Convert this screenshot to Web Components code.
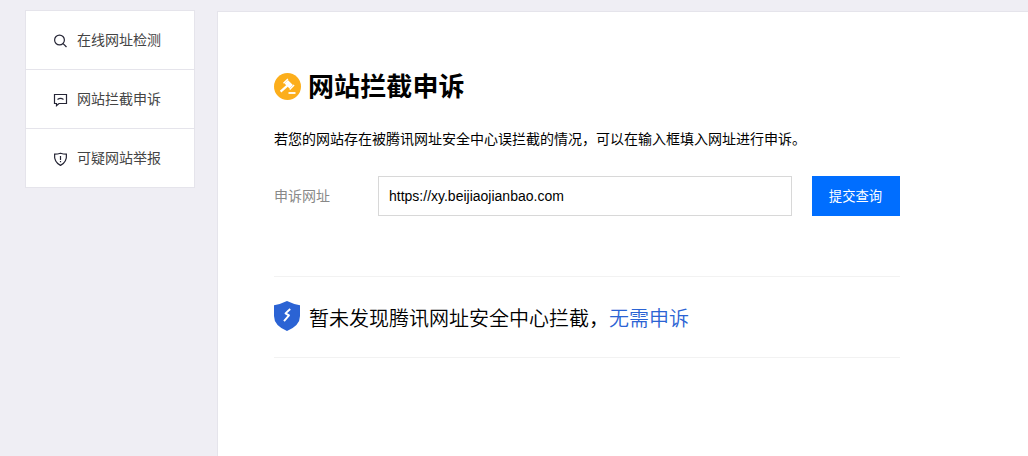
<!DOCTYPE html>
<html lang="zh-CN">
<head>
<meta charset="utf-8">
<title>网站拦截申诉</title>
<style>
    body {
        margin: 0;
        height: 456px;
        overflow: hidden;
        background: #efeef4;
        color: #000;
        font: 14px/20px "Liberation Sans", "Noto Sans CJK SC", sans-serif;
        --line: #e5e4eb;
        --primary: #006eff;
        --link: #2b63d4;
    }
</style>
</head>
<body>
<appeal-page>
    <side-menu slot="menu">
        <menu-entry icon="search">在线网址检测</menu-entry>
        <menu-entry icon="message">网站拦截申诉</menu-entry>
        <menu-entry icon="shield">可疑网站举报</menu-entry>
    </side-menu>
    <page-title>网站拦截申诉</page-title>
    <page-intro>若您的网站存在被腾讯网址安全中心误拦截的情况，可以在输入框填入网址进行申诉。</page-intro>
    <url-form label="申诉网址" value="https://xy.beijiaojianbao.com" action="提交查询"></url-form>
    <result-bar>暂未发现腾讯网址安全中心拦截，<span slot="status">无需申诉</span></result-bar>
</appeal-page>

<script>
// appeal-page: menu on the left, white panel on the right
class AppealPage extends HTMLElement {
    constructor() {
        super();
        this.attachShadow({ mode: 'open' });
        this.shadowRoot.innerHTML = `
            <style>
                :host {
                    display: flex;
                    align-items: flex-start;
                    gap: 22px;
                    padding-left: 25px;
                    height: 100%;
                    box-sizing: border-box;
                }
                aside {
                    flex: none;
                    width: 170px;
                    padding-top: 10px;
                }
                main {
                    flex: 1;
                    height: 445px;
                    margin-top: 11px;
                    padding: 56px 0 0 56px;
                    box-sizing: border-box;
                    background: #fff;
                    border: solid var(--line);
                    border-width: 1px 0 0 1px;
                }
            </style>
            <aside><slot name="menu"></slot></aside>
            <main><slot></slot></main>
        `;
    }
}
customElements.define('appeal-page', AppealPage);

class SideMenu extends HTMLElement {
    constructor() {
        super();
        this.attachShadow({ mode: 'open' });
        this.shadowRoot.innerHTML = `
            <style>
                :host {
                    display: block;
                    background: #fff;
                    border: solid var(--line);
                    border-width: 1px 1px 0;
                }
            </style>
            <slot></slot>
        `;
    }
}
customElements.define('side-menu', SideMenu);

const MENU_ICONS = {
    search: '<circle cx="5.5" cy="6" r="4.9"/><path d="M9.1 9.6 12.5 13"/>',
    message: '<path d="M.5 1.5h12v9H5L2.5 12.6v-2.1h-2z"/><path d="M3.5 6.4Q6.5 4.3 9.5 6.4"/>',
    shield: '<path d="M6.5 1.2Q9.3 2.1 12.4 2.2Q13.2 9.8 6.5 13.4Q-.2 9.8 .6 2.2Q3.7 2.1 6.5 1.2z"/><path d="M6.5 4v4M6.5 9v1.3"/>'
};

class MenuEntry extends HTMLElement {
    constructor() {
        super();
        this.attachShadow({ mode: 'open' });
        this.shadowRoot.innerHTML = `
            <style>
                :host {
                    display: flex;
                    align-items: center;
                    height: 58px;
                    padding-left: 28px;
                    color: #444;
                    border-bottom: 1px solid var(--line);
                }
                svg {
                    width: 14px;
                    height: 14px;
                    margin: 2px 9px 0 0;
                    overflow: visible;
                    fill: none;
                    stroke: #262636;
                    stroke-width: 1.2;
                }
            </style>
            <svg viewBox="0 0 14 14"></svg>
            <slot></slot>
        `;
    }

    connectedCallback() {
        this.shadowRoot.querySelector('svg').innerHTML = MENU_ICONS[this.getAttribute('icon')] || '';
    }
}
customElements.define('menu-entry', MenuEntry);

class PageTitle extends HTMLElement {
    constructor() {
        super();
        this.attachShadow({ mode: 'open' });
        this.shadowRoot.innerHTML = `
            <style>
                :host {
                    display: flex;
                    align-items: center;
                    height: 38px;
                }
                svg {
                    width: 27px;
                    height: 27px;
                    margin: 0 7px 1px 0;
                }
                h1 {
                    margin: 0;
                    font-size: 26px;
                    line-height: 38px;
                    font-weight: bold;
                    letter-spacing: .1px;
                }
            </style>
            <svg viewBox="0 0 27 27">
                <circle cx="13.5" cy="13.5" r="13.5" fill="#fcae1b"/>
                <g fill="none" stroke="#fff">
                    <path d="M12.2 8.7 17.2 13.7" stroke-width="4.8"/>
                    <path d="M13.9 5.9 9.5 10.3M20.1 12.1 15.7 16.5" stroke-width="1.4"/>
                    <path d="M13.3 12.6 6.6 18.6" stroke-width="2.2"/>
                    <path d="M14.5 20h7" stroke-width="1.8"/>
                </g>
            </svg>
            <h1><slot></slot></h1>
        `;
    }
}
customElements.define('page-title', PageTitle);

class PageIntro extends HTMLElement {
    constructor() {
        super();
        this.attachShadow({ mode: 'open' });
        this.shadowRoot.innerHTML = `
            <style>
                :host {
                    display: block;
                    margin-top: 23px;
                    line-height: 20px;
                }
            </style>
            <slot></slot>
        `;
    }
}
customElements.define('page-intro', PageIntro);

class UrlForm extends HTMLElement {
    constructor() {
        super();
        this.attachShadow({ mode: 'open' });
        this.shadowRoot.innerHTML = `
            <style>
                :host {
                    display: flex;
                    align-items: center;
                    width: 626px;
                    height: 40px;
                    margin-top: 27px;
                }
                label {
                    width: 104px;
                    color: #888;
                }
                input {
                    flex: 1;
                    min-width: 0;
                    height: 40px;
                    margin: 0 20px 0 0;
                    padding: 0 10px;
                    box-sizing: border-box;
                    border: 1px solid #d8d8d8;
                    border-radius: 0;
                    outline: none;
                    background: #fff;
                    color: #000;
                    font: inherit;
                }
                button {
                    width: 88px;
                    height: 40px;
                    padding: 2px 1px 0 0;
                    border: 0;
                    background: var(--primary);
                    color: #fff;
                    font: inherit;
                    font-size: 13.333px;
                }
            </style>
            <label for="url"></label>
            <input id="url" type="text" spellcheck="false">
            <button type="button"></button>
        `;
    }

    connectedCallback() {
        this.shadowRoot.querySelector('label').textContent = this.getAttribute('label');
        this.shadowRoot.querySelector('input').value = this.getAttribute('value');
        this.shadowRoot.querySelector('button').textContent = this.getAttribute('action');
    }
}
customElements.define('url-form', UrlForm);

class ResultBar extends HTMLElement {
    constructor() {
        super();
        this.attachShadow({ mode: 'open' });
        this.shadowRoot.innerHTML = `
            <style>
                :host {
                    display: flex;
                    align-items: center;
                    width: 626px;
                    height: 82px;
                    margin-top: 60px;
                    box-sizing: border-box;
                    border: solid #f2f2f2;
                    border-width: 1px 0;
                }
                svg {
                    width: 26px;
                    height: 30px;
                    margin: 0 9px 2px 0;
                }
                p {
                    margin: 4px 0 0;
                    font-size: 20px;
                    line-height: 30px;
                    font-weight: 350;
                }
                .status {
                    color: var(--link);
                }
            </style>
            <svg viewBox="0 0 26 30">
                <path d="M13 0Q19 3 26 4.3V15Q26 24.5 13 30Q0 24.5 0 15V4.3Q7 3 13 0z" fill="#2b63d4"/>
                <path d="M16.2 8 11.5 12.4 15 14.4 10 20.2" fill="none" stroke="#fff" stroke-width="1.9" stroke-linejoin="round"/>
            </svg>
            <p><slot></slot><span class="status"><slot name="status"></slot></span></p>
        `;
    }
}
customElements.define('result-bar', ResultBar);
</script>
</body>
</html>
